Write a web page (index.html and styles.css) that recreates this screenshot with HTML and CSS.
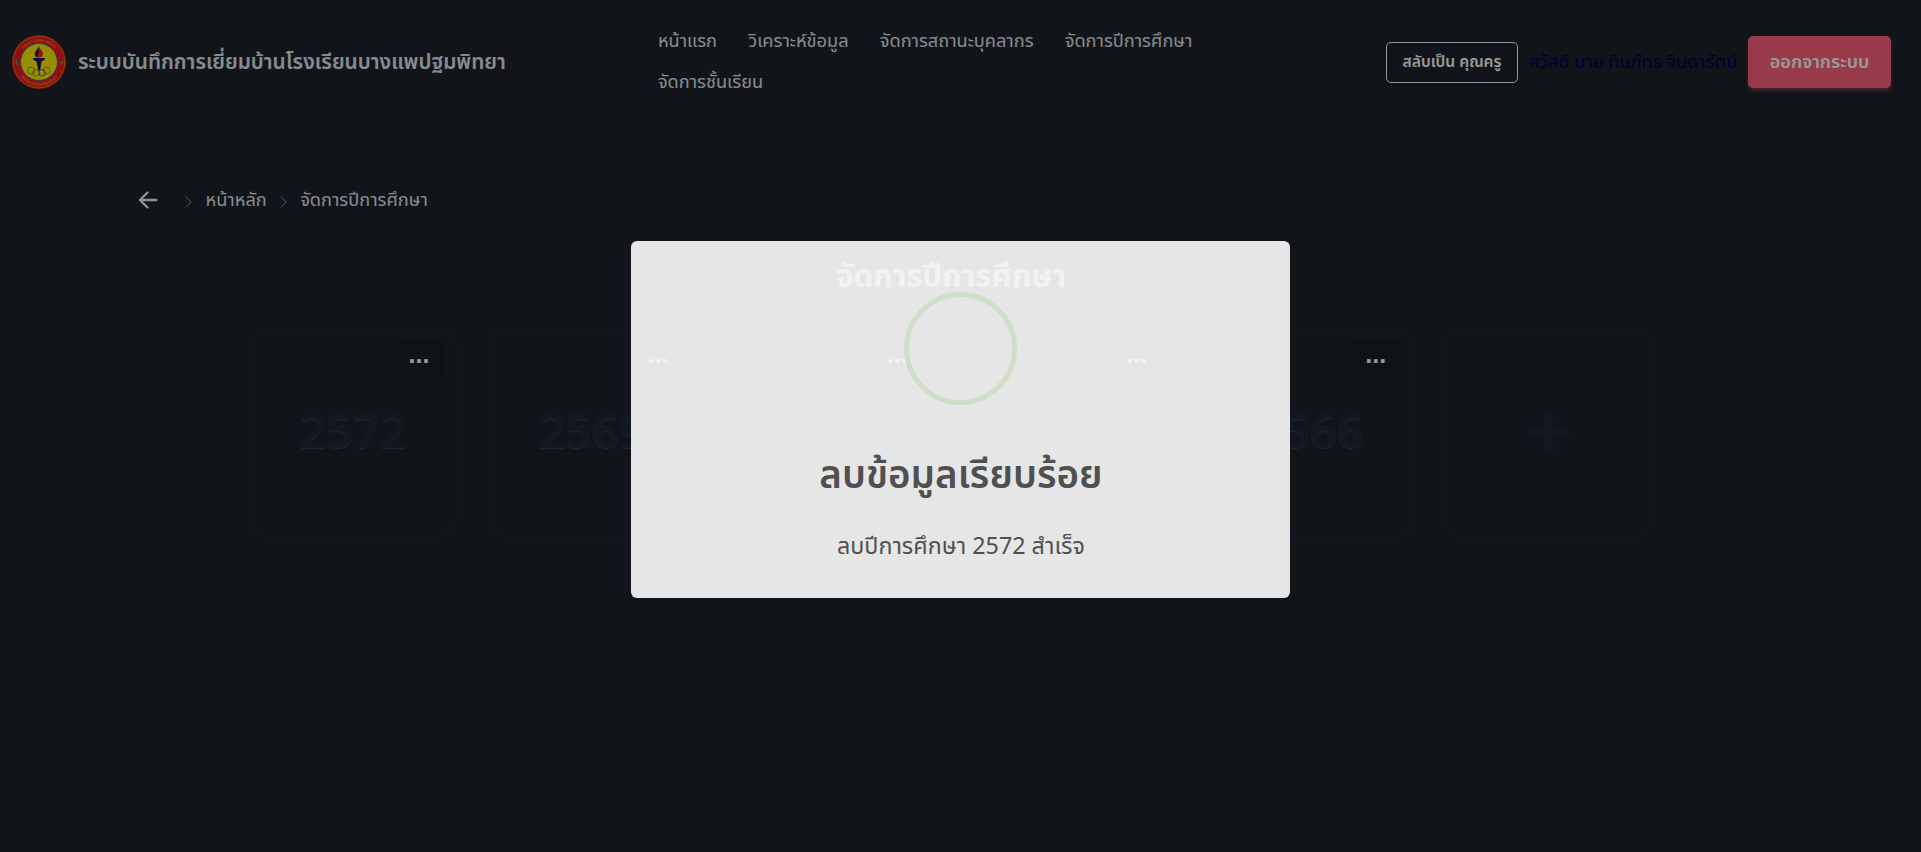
FILE: index.html
```html
<!DOCTYPE html>
<html lang="th">
<head>
<meta charset="utf-8">
<title>จัดการปีการศึกษา</title>
<link rel="stylesheet" href="styles.css">
</head>
<body>
<header class="navbar">
  <div class="brand">
    <svg class="logo" viewBox="0 0 54 54">
      <circle cx="27" cy="27" r="27" fill="#f01a20"/>
      <circle cx="27" cy="27" r="25.8" fill="none" stroke="#d8a010" stroke-width=".6"/>
      <circle cx="27" cy="27" r="18.4" fill="#faee08" stroke="#55679a" stroke-width="1"/>
      <path id="arcTop" d="M6.500 27a20.500 20.500 0 0 1 41 0" fill="none"/>
      <path id="arcBottom" d="M3.500 27a23.500 23.500 0 0 0 47 0" fill="none"/>
      <text class="seal"><textPath href="#arcTop" startOffset="50%">ปัญญา โลกสมิ ปชโชโต</textPath></text>
      <text class="seal"><textPath href="#arcBottom" startOffset="50%">โรงเรียนบางแพปฐมพิทยา</textPath></text>
      <path d="M2.500 27.500h4M4.500 25v5M47.500 27.500h4M49.500 25v5" stroke="#69a02c" stroke-width=".9"/>
      <path d="M26.500 11c1 3 5 5 4.500 8.500-.2 2-1.500 3-3.500 3h-2c-3-1.500-3.500-4-1.500-6.500.8-1.500 2.500-2.500 2.500-5z" fill="#f8201c"/>
      <path d="M26.500 11c-.2 3-3 4.500-3.500 7.500-.3 2 .8 3.500 2.500 4 .5-3.500 2-4.500 1-7.500z" fill="#1a1a50"/>
      <path d="M21 23h12l-.5 2-3 1.500-1.500 9.500h-1.500l-2-9.500-3-1.500z" fill="#15155c"/>
      <g fill="none" stroke-width=".9">
        <circle cx="19" cy="35.500" r="3.500" stroke="#2f9a2f"/>
        <circle cx="24" cy="37.800" r="3.300" stroke="#b86a50"/>
        <circle cx="30" cy="37.800" r="3.300" stroke="#3a4da8"/>
        <circle cx="34.700" cy="35.500" r="3.500" stroke="#e06018"/>
      </g>
    </svg>
    <span class="brand-name">ระบบบันทึกการเยี่ยมบ้านโรงเรียนบางแพปฐมพิทยา</span>
  </div>
  <nav class="menu">
    <a>หน้าแรก</a><a>วิเคราะห์ข้อมูล</a><a>จัดการสถานะบุคลากร</a><a>จัดการปีการศึกษา</a><a>จัดการชั้นเรียน</a>
  </nav>
  <div class="account">
    <button class="switch">สลับเป็น คุณครู</button>
    <span class="greeting">สวัสดี นาย ทินภัทร จินดารัตน์</span>
    <button class="logout">ออกจากระบบ</button>
  </div>
</header>
<div class="crumbs">
  <svg class="back" viewBox="0 0 20 18"><path d="M9.500 1.500 2 9l7.500 7.500M2 9h16.500" fill="none" stroke="currentColor" stroke-width="2.300" stroke-linecap="round" stroke-linejoin="round"/></svg>
  <svg class="chev" viewBox="0 0 7 12"><path d="M.7.700 6.200 6 .7 11.300" fill="none" stroke="currentColor"/></svg>
  <a>หน้าหลัก</a>
  <svg class="chev" viewBox="0 0 7 12"><path d="M.7.700 6.200 6 .7 11.300" fill="none" stroke="currentColor"/></svg>
  <a>จัดการปีการศึกษา</a>
</div>
<main class="content">
  <h1>จัดการปีการศึกษา</h1>
  <div class="years">
    <div class="card"><button class="more">...</button><span class="year">2572</span></div>
    <div class="card"><button class="more">...</button><span class="year">2569</span></div>
    <div class="card"><button class="more">...</button><span class="year">2568</span></div>
    <div class="card"><button class="more">...</button><span class="year">2567</span></div>
    <div class="card"><button class="more">...</button><span class="year">2566</span></div>
    <div class="card add"><svg class="plus" viewBox="0 0 42 42"><path d="M21 4.500v33M4.500 21h33" stroke="currentColor" stroke-width="9" stroke-linecap="round"/></svg></div>
  </div>
</main>
<div class="backdrop">
  <div class="dialog">
    <div class="ring"></div>
    <h2>ลบข้อมูลเรียบร้อย</h2>
    <p>ลบปีการศึกษา 2572 สำเร็จ</p>
  </div>
</div>
</body>
</html>
```
FILE: styles.css
```css
* { box-sizing: border-box; }
body {
  margin: 0;
  height: 852px;
  overflow: hidden;
  background: #1d232a;
  color: #e2e8ee;
  font-family: "Noto Sans", "Noto Sans Thai", sans-serif;
  font-size: 18.200px;
}
button { font-family: inherit; background: none; padding: 0; white-space: nowrap; }
.navbar { display: flex; align-items: center; height: 124px; padding: 0 30px 0 11.500px; }
.brand { display: flex; align-items: center; gap: 12.500px; width: 630.800px; }
.logo { width: 54px; height: 54px; }
.seal { font-size: 4px; font-weight: 400; fill: #e8b810; text-anchor: middle; }
.brand-name { font-size: 20.800px; font-weight: 600; white-space: nowrap; }
.menu { display: flex; flex-wrap: wrap; width: 600px; margin-top: -2px; }
.menu a { padding: 0 15.600px; height: 41px; line-height: 41px; white-space: nowrap; }
.account { display: flex; align-items: center; margin-left: auto; }
.switch { width: 132px; height: 41px; border: 1px solid #fff; border-radius: 5px; color: #fff; font-size: 15.600px; font-weight: 600; }
.greeting { width: 230px; text-align: center; color: #000055; white-space: nowrap; }
.logout { width: 143px; height: 52px; border: 0; border-radius: 5px; background: #ff627d; color: #fff; font-size: 18.200px; font-weight: 600; box-shadow: 0 3px 4px -1px rgba(255, 98, 125, .5); }
.crumbs { display: flex; align-items: center; height: 30px; margin-top: 61px; padding-left: 138px; }
.back { width: 20px; height: 18px; margin-right: 27px; color: #f0f4f8; }
.chev { width: 7px; height: 12px; margin: 3px 13.500px 0 0; color: #858b93; }
.crumbs a { margin-right: 13px; white-space: nowrap; }
.content { width: 1902px; padding-top: 34px; }
h1 { margin: 0; height: 52px; line-height: 52px; font-size: 31.200px; font-weight: 700; text-align: center; }
.years { display: flex; justify-content: center; gap: 31.200px; padding-top: 28px; }
.card { position: relative; display: flex; align-items: center; justify-content: center; width: 208px; height: 208px; border: 1px solid #1d2938; border-radius: 16px; }
.more { position: absolute; top: 10px; right: 11px; width: 52px; height: 41px; border: 1px solid #1a2027; border-radius: 5px; background: #1b2026; color: #fff; font-family: "Liberation Sans", sans-serif; font-size: 25px; font-weight: 700; line-height: 20px; padding-bottom: 13px; }
.year { color: #1d2938; font-size: 47px; font-weight: 600; line-height: 1; padding-bottom: 5px; text-shadow: 0 1px 1px #414347; }
.plus { width: 42px; height: 42px; color: #1d2938; }
.backdrop { position: absolute; inset: 0; background: rgba(0, 0, 0, .4); }
.dialog { display: flex; flex-direction: column; align-items: center; width: 659px; height: 357px; margin: 241px 0 0 631.400px; padding-top: 51px; border-radius: 6px; background: rgba(255, 254, 254, .897); color: #505050; }
.ring { width: 113px; height: 113px; border: 5px solid #cfdec6; border-radius: 50%; }
h2 { margin: 38px 0 0; height: 60px; line-height: 60px; font-size: 38.500px; font-weight: 600; }
p { margin: 22px 0 0; height: 40px; line-height: 40px; font-size: 23.300px; }
```
